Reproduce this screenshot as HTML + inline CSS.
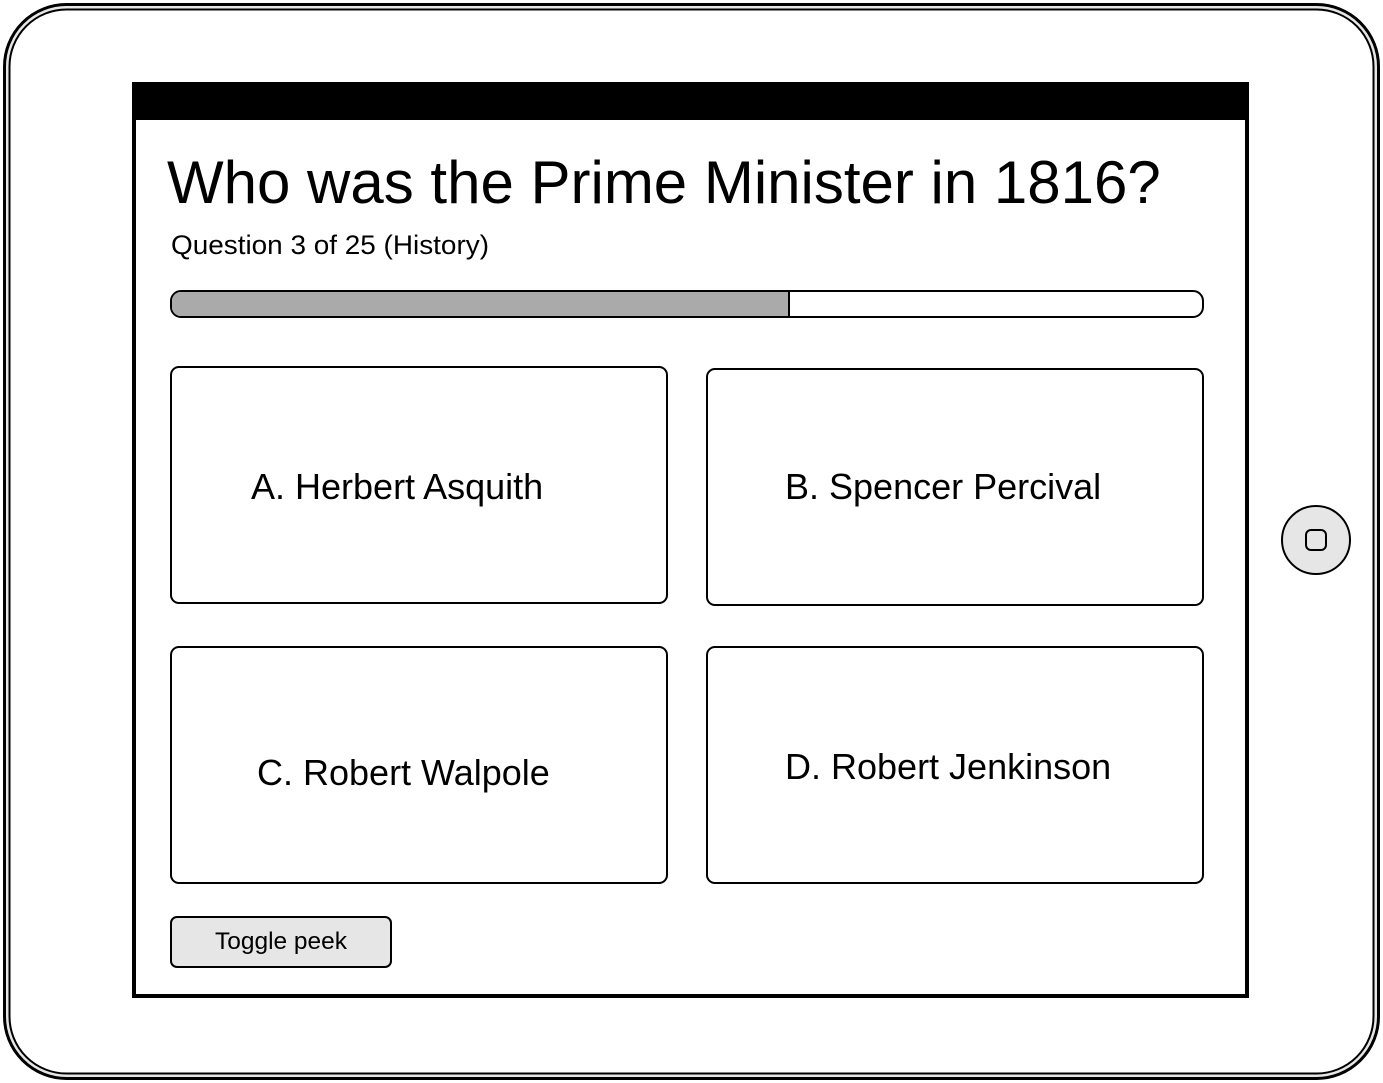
<!DOCTYPE html>
<html><head><meta charset="utf-8"><style>
html,body{margin:0;padding:0;background:#fff}
svg{display:block}
text{font-family:"Liberation Sans",Arial,sans-serif;fill:#000}
</style></head><body>
<svg width="1383" height="1083" viewBox="0 0 1383 1083" xmlns="http://www.w3.org/2000/svg">
<rect x="4.5" y="4.5" width="1374" height="1074" rx="62" fill="#e6e6e6" stroke="#000" stroke-width="3"/>
<rect x="9.5" y="9.5" width="1364" height="1064" rx="57" fill="#fff" stroke="#000" stroke-width="2"/>
<rect x="134" y="84" width="1113" height="912" fill="#fff" stroke="#000" stroke-width="4"/>
<rect x="132" y="82" width="1117" height="38" fill="#000"/>
<text x="167" y="203" font-size="60">Who was the Prime Minister in 1816?</text>
<text x="171" y="254" font-size="27" textLength="318" lengthAdjust="spacingAndGlyphs">Question 3 of 25 (History)</text>
<rect x="171" y="291" width="1032" height="26" rx="10" fill="#fff" stroke="#000" stroke-width="2"/>
<path d="M789 292 H181 a9 9 0 0 0 -9 9 v6 a9 9 0 0 0 9 9 H789 Z" fill="#aaa"/>
<line x1="789" y1="292" x2="789" y2="316" stroke="#000" stroke-width="2"/>
<rect x="171" y="367" width="496" height="236" rx="8" fill="#fff" stroke="#000" stroke-width="2"/>
<rect x="707" y="369" width="496" height="236" rx="8" fill="#fff" stroke="#000" stroke-width="2"/>
<rect x="171" y="647" width="496" height="236" rx="8" fill="#fff" stroke="#000" stroke-width="2"/>
<rect x="707" y="647" width="496" height="236" rx="8" fill="#fff" stroke="#000" stroke-width="2"/>
<text x="251" y="499" font-size="36">A. Herbert Asquith</text>
<text x="785" y="499" font-size="36">B. Spencer Percival</text>
<text x="257" y="785" font-size="36">C. Robert Walpole</text>
<text x="785" y="779" font-size="36">D. Robert Jenkinson</text>
<rect x="171" y="917" width="220" height="50" rx="6" fill="#e6e6e6" stroke="#000" stroke-width="2"/>
<text x="215" y="949" font-size="24" textLength="132" lengthAdjust="spacingAndGlyphs">Toggle peek</text>
<circle cx="1316" cy="540" r="34" fill="#e6e6e6" stroke="#000" stroke-width="2"/>
<rect x="1306" y="530" width="20" height="20" rx="5" fill="none" stroke="#000" stroke-width="2"/>
</svg>
</body></html>
